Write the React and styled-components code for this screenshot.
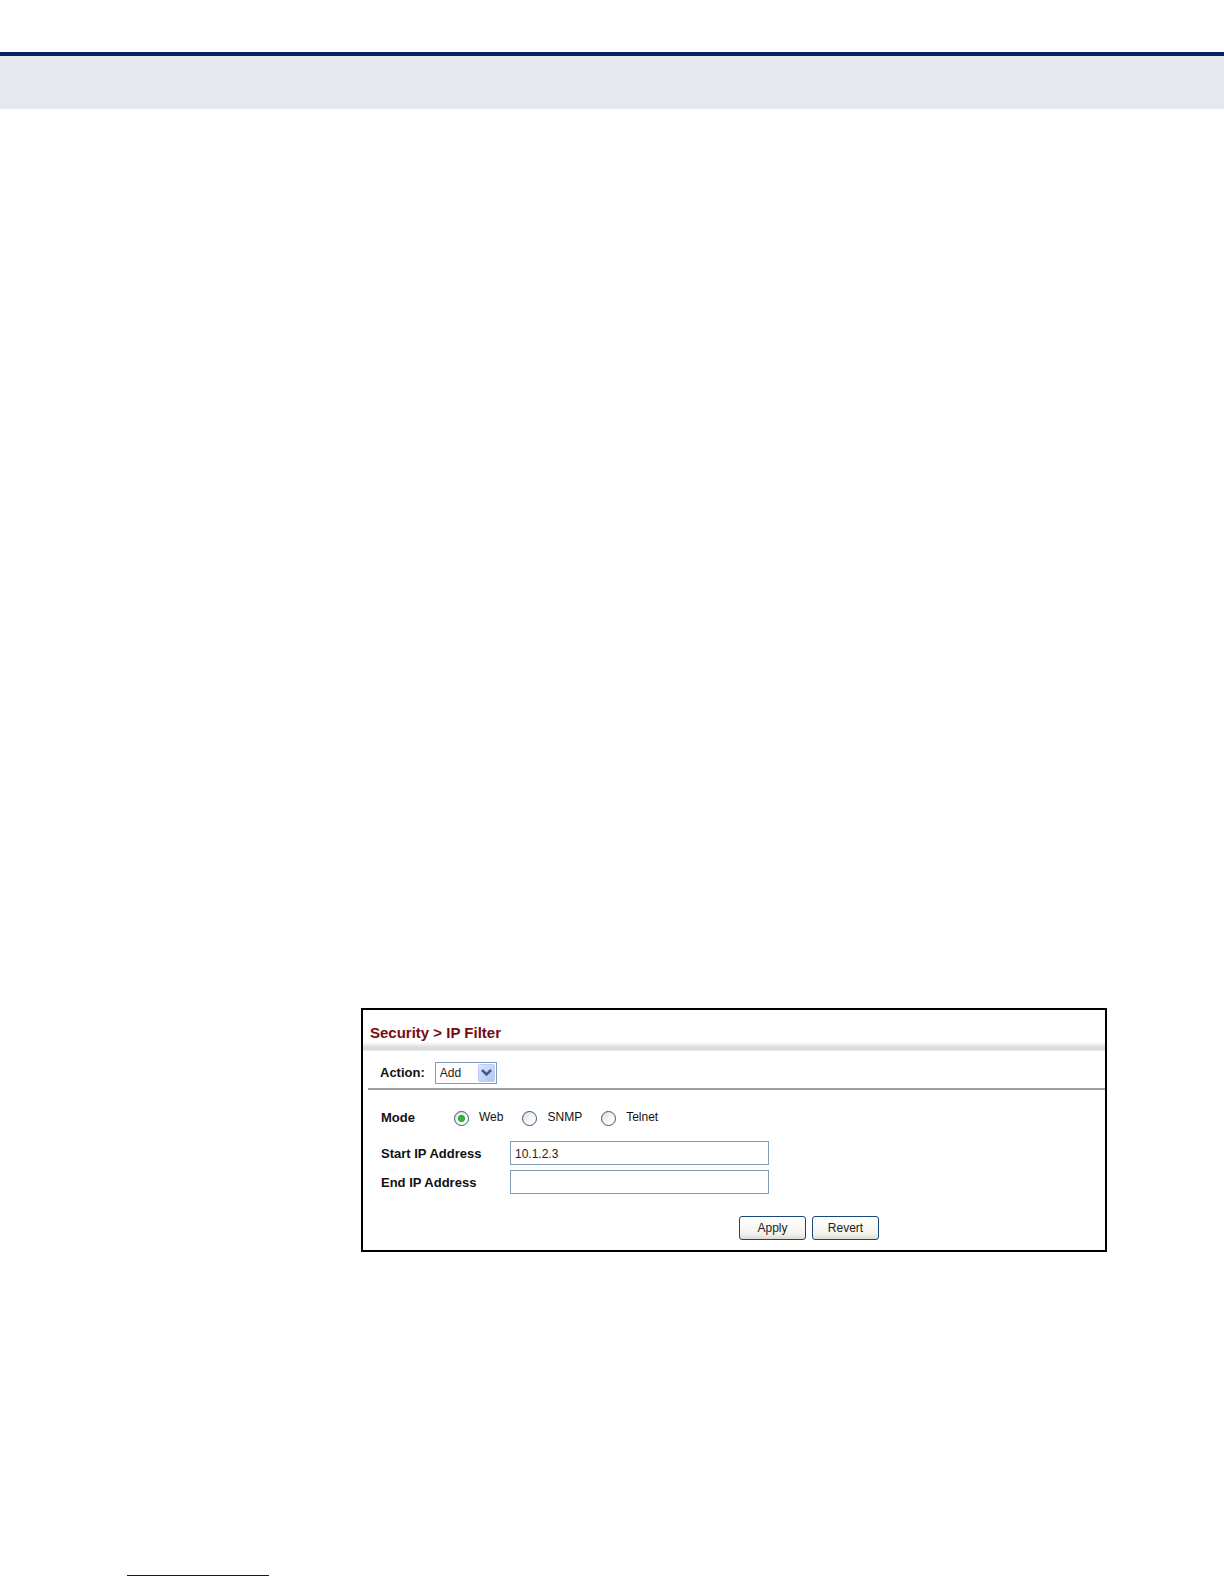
import React from "react";
import styled, { createGlobalStyle } from "styled-components";

const modes = ["Web", "SNMP", "Telnet"];

const App = () => {
  const [action, setAction] = React.useState("Add");
  const [mode, setMode] = React.useState("Web");
  const [start, setStart] = React.useState("10.1.2.3");
  const [end, setEnd] = React.useState("");

  const revert = () => {
    setMode("Web");
    setStart("10.1.2.3");
    setEnd("");
  };

  return (
    <Page>
      <GlobalStyle />
      <Banner />
      <Main>
        <Panel onSubmit={(e) => e.preventDefault()}>
          <Title>Security &gt; IP Filter</Title>
          <ActionRow>
            <Label htmlFor="action">Action:</Label>
            <SelectBox>
              <select
                id="action"
                value={action}
                onChange={(e) => setAction(e.target.value)}
              >
                <option>Add</option>
                <option>Show</option>
              </select>
              <Arrow viewBox="0 0 17 18" aria-hidden="true">
                <defs>
                  <linearGradient id="arrow-fill" x1="0" y1="0" x2="1" y2="1">
                    <stop offset="0" stopColor="#dbe6fd" />
                    <stop offset="1" stopColor="#afc4f5" />
                  </linearGradient>
                </defs>
                <rect
                  x="0.5"
                  y="0.5"
                  width="16"
                  height="17"
                  rx="1"
                  fill="url(#arrow-fill)"
                  stroke="#bccdf3"
                />
                <path
                  d="M4 6L8.5 10.5L13 6"
                  fill="none"
                  stroke="#435a87"
                  strokeWidth="2.6"
                />
              </Arrow>
            </SelectBox>
          </ActionRow>
          <Fields>
            <ModeRow role="radiogroup" aria-labelledby="mode">
              <Label as="span" id="mode">
                Mode
              </Label>
              {modes.map((item) => (
                <Option key={item}>
                  <input
                    type="radio"
                    name="mode"
                    value={item}
                    checked={mode === item}
                    onChange={() => setMode(item)}
                  />
                  <span>{item}</span>
                </Option>
              ))}
            </ModeRow>
            <Field>
              <Label htmlFor="start">Start IP Address</Label>
              <TextInput
                id="start"
                type="text"
                value={start}
                onChange={(e) => setStart(e.target.value)}
              />
            </Field>
            <Field>
              <Label htmlFor="end">End IP Address</Label>
              <TextInput
                id="end"
                type="text"
                value={end}
                onChange={(e) => setEnd(e.target.value)}
              />
            </Field>
          </Fields>
          <Buttons>
            <Button type="submit">Apply</Button>
            <Button type="button" onClick={revert}>
              Revert
            </Button>
          </Buttons>
        </Panel>
      </Main>
      <Footer>
        <FooterRule />
      </Footer>
    </Page>
  );
};

const GlobalStyle = createGlobalStyle`
  *,
  *::before,
  *::after {
    box-sizing: border-box;
  }

  body {
    margin: 0;
    background: #fff;
    color: #111;
    font-family: "Liberation Sans", Arial, sans-serif;
    font-size: 12px;
  }
`;

const Page = styled.div`
  display: flex;
  flex-direction: column;
  min-height: 100vh;
  padding-top: 52px;
`;

const Banner = styled.header`
  height: 57px;
  background: #e5e8ef;
  border-top: 4px solid #062463;
`;

const Main = styled.main`
  flex: 1;
  padding: 899px 117px 48px 361px;
`;

const Panel = styled.form`
  border: 2px solid #000;
  padding-bottom: 10px;
`;

const Title = styled.h1`
  margin: 0;
  padding: 13px 7px;
  height: 41px;
  font-size: 15px;
  line-height: 20px;
  color: #750c12;
  background: linear-gradient(#fff, #dcdcdc 60%, #dcdcdc 85%, #f4f4f4) bottom /
    100% 9px no-repeat;
`;

const ActionRow = styled.div`
  display: flex;
  align-items: center;
  height: 39px;
  margin-left: 5px;
  padding: 7px 0 0 12px;
  gap: 10px;
  border-bottom: 2px solid #a0a0a0;
`;

const Label = styled.label`
  font-size: 13px;
  font-weight: 700;
  line-height: 16px;
`;

const SelectBox = styled.div`
  position: relative;

  select {
    display: block;
    appearance: none;
    width: 62px;
    height: 22px;
    margin: 0;
    padding: 0 4px;
    border: 1px solid #7f9db9;
    border-radius: 0;
    background: #fff;
    color: #222;
    font: inherit;
  }
`;

const Arrow = styled.svg`
  position: absolute;
  top: 2px;
  right: 2px;
  width: 17px;
  height: 18px;
  pointer-events: none;
`;

const Fields = styled.div`
  display: flex;
  flex-direction: column;
  gap: 5px;
  padding: 18px;
`;

const ModeRow = styled.div`
  display: flex;
  align-items: center;
  height: 20px;
  margin-bottom: 8px;

  > span {
    width: 73px;
    padding-bottom: 1px;
  }
`;

const Option = styled.label`
  display: flex;
  align-items: center;
  gap: 10px;
  margin-right: 19px;

  span {
    padding-bottom: 2px;
  }

  input {
    appearance: none;
    width: 15px;
    height: 15px;
    margin: 0;
    border: 1px solid #2f5585;
    border-radius: 50%;
    background: linear-gradient(135deg, #dcdcd7, #fff 75%);
  }

  input:checked {
    background: radial-gradient(
        circle,
        #35b835 0 2px,
        #22a122 3px,
        transparent 4px
      ),
      linear-gradient(135deg, #dcdcd7, #fff 75%);
  }
`;

const Field = styled.div`
  display: flex;
  align-items: center;

  label {
    flex: 0 0 129px;
    padding-top: 1px;
  }
`;

const TextInput = styled.input`
  width: 259px;
  height: 24px;
  padding: 1px 4px 0;
  border: 1px solid #7f9db9;
  background: #fff;
  color: #222;
  font: inherit;
`;

const Buttons = styled.div`
  display: flex;
  justify-content: flex-end;
  gap: 6px;
  padding: 4px 226px 0 0;
`;

const Button = styled.button`
  width: 67px;
  height: 24px;
  padding: 0;
  border: 1px solid #17477c;
  border-radius: 3px;
  background: linear-gradient(#fff, #f3f3ee 75%, #dfdcd2);
  color: #222;
  font: inherit;
`;

const Footer = styled.footer`
  padding: 0 127px 8px;
`;

const FooterRule = styled.div`
  width: 142px;
  border-top: 1px solid #0c0c88;
`;

export default App;
